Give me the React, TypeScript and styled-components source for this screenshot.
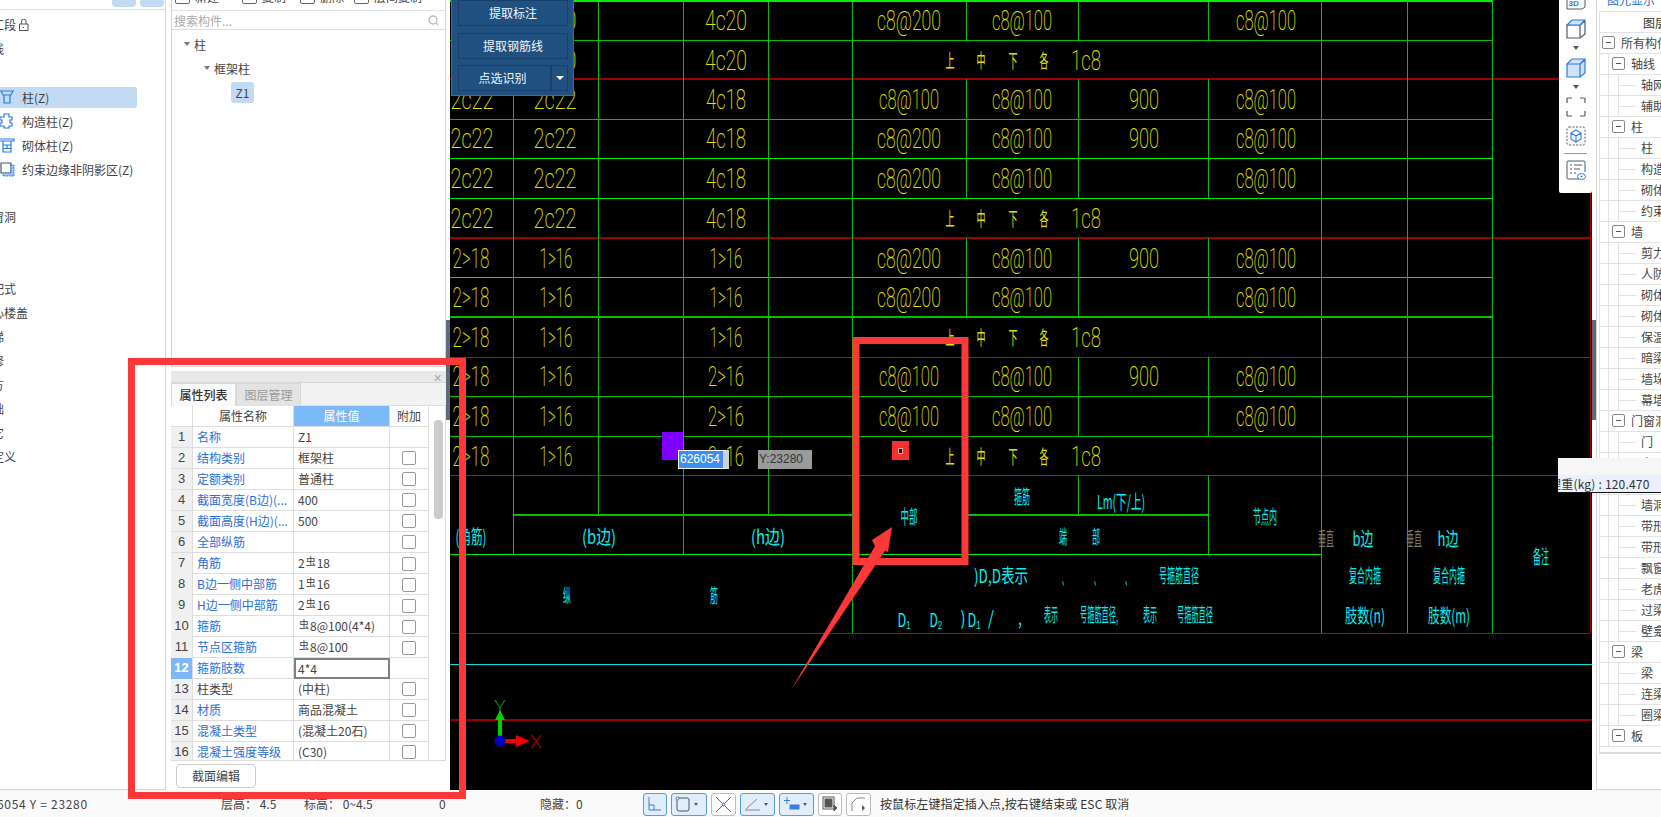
import React from "react";
import styled, { createGlobalStyle } from "styled-components";

const Global = createGlobalStyle`
  html, body { margin: 0; padding: 0; background: #fff; overflow: hidden; }
  body { font-family: "Noto Sans CJK SC", "Liberation Sans", sans-serif; font-size: 12px; color: #333; }
  * { box-sizing: border-box; }
`;

const Page = styled.div`
  position: relative;
  width: 1661px;
  height: 817px;
  overflow: hidden;
  display: flex;
  flex-direction: column;
`;
const Main = styled.div`
  position: relative;
  display: flex;
  height: 790px;
`;

/* ---------- left ---------- */
const LeftPanel = styled.aside`
  width: 166px;
  flex: none;
  border-right: 1px solid #d4d4d4;
  border-bottom: 1px solid #d4d4d4;
  overflow: hidden;
`;
const LeftHead = styled.div`
  height: 10px;
  border-bottom: 1px solid #ddd;
  display: flex;
  justify-content: flex-end;
  gap: 4px;
  padding-right: 1px;
`;
const HeadButton = styled.div`
  width: 24px;
  height: 7px;
  background: #c3daf3;
  border-radius: 0 0 4px 4px;
  display: flex;
  justify-content: center;
`;
const LeftList = styled.div`
  padding-top: 3px;
  display: flex;
  flex-direction: column;
`;
const GroupRow = styled.div`
  height: 24px;
  flex: none;
  line-height: 24px;
  margin-left: -20px;
  white-space: nowrap;
  display: flex;
  align-items: center;
  gap: 3px;
  color: #444;
`;
const ChildRow = styled.div<{ $active?: boolean }>`
  height: 21px;
  flex: none;
  margin: 1.5px 28px 1.5px 0;
  display: flex;
  align-items: center;
  gap: 7px;
  white-space: nowrap;
  border-radius: 0 3px 3px 0;
  color: #444;
  background: ${(p) => (p.$active ? "#c3daf3" : "transparent")};
`;

/* ---------- middle ---------- */
const MiddleColumn = styled.div`
  width: 275px;
  flex: none;
  margin-left: 5px;
  display: flex;
  flex-direction: column;
`;
const ComponentPanel = styled.section`
  height: 367px;
  flex: none;
  border-left: 1px solid #d4d4d4;
  border-right: 1px solid #d4d4d4;
  border-bottom: 1px solid #d4d4d4;
`;
const TopTools = styled.div`
  height: 11px;
  overflow: hidden;
  display: flex;
  border-bottom: 1px solid #e2e2e2;
  padding-left: 3px;
`;
const TopTool = styled.div<{ $w: number }>`
  width: ${(p) => p.$w}px;
  margin-top: -11px;
  height: 16px;
  line-height: 16px;
  display: flex;
  gap: 5px;
  white-space: nowrap;
  color: #444;
`;
const ToolGlyph = styled.span`
  width: 15px;
  height: 15px;
  border: 1px solid #666;
  border-radius: 2px;
`;
const SearchRow = styled.div`
  height: 19px;
  display: flex;
  align-items: center;
  justify-content: space-between;
  padding: 0 6px 0 2px;
  border-bottom: 1px solid #ddd;
  color: #aaa;
`;
const TreeBody = styled.div`
  padding-top: 2px;
`;
const TreeRow = styled.div<{ $level: number }>`
  height: 24px;
  display: flex;
  align-items: center;
  gap: 4px;
  padding-left: ${(p) => 12 + p.$level * 20}px;
  color: #444;
`;
const TreeCaret = styled.span`
  width: 0;
  height: 0;
  border-left: 3px solid transparent;
  border-right: 3px solid transparent;
  border-top: 4px solid #777;
`;
const LeafChip = styled.span`
  margin-left: 47px;
  width: 23px;
  height: 21px;
  line-height: 21px;
  text-align: center;
  background: #c3daf3;
  border-radius: 3px;
  color: #444;
`;

const PropertyPanel = styled.section`
  margin-top: 4px;
  flex: 1;
  display: flex;
  flex-direction: column;
`;
const PanelTitle = styled.div`
  height: 12px;
  flex: none;
  background: #e8e8e8;
  border-bottom: 1px solid #d8d8d8;
  display: flex;
  align-items: center;
  justify-content: flex-end;
  padding-right: 4px;
  color: #aaa;
  font-size: 11px;
`;
const TabRow = styled.div`
  height: 23px;
  flex: none;
  display: flex;
  background: #f2f2f2;
  border-bottom: 1px solid #ddd;
`;
const Tab = styled.div<{ $active?: boolean }>`
  width: 65px;
  height: 23px;
  line-height: 21px;
  text-align: center;
  font-weight: ${(p) => (p.$active ? 500 : 400)};
  color: ${(p) => (p.$active ? "#333" : "#999")};
  background: ${(p) => (p.$active ? "#fafafa" : "#e3e3e3")};
  border: 1px solid #d8d8d8;
  border-bottom: none;
`;
const TableWrap = styled.div`
  height: 355px;
  flex: none;
  display: flex;
  border-bottom: 1px solid #ddd;
  border-right: 1px solid #ddd;
  overflow: hidden;
`;
const Table = styled.div`
  width: 258px;
  flex: none;
`;
const TableRow = styled.div`
  display: grid;
  grid-template-columns: 22px 101px 96px 39px;
  height: 21px;
  line-height: 20px;
  border-bottom: 1px solid #ddd;
`;
const HeadCell = styled.div<{ $on?: boolean }>`
  text-align: center;
  border-right: 1px solid #ddd;
  color: ${(p) => (p.$on ? "#fff" : "#444")};
  background: ${(p) => (p.$on ? "#7db8f8" : "#fff")};
`;
const IndexCell = styled.div<{ $on?: boolean }>`
  text-align: center;
  border-right: 1px solid #ddd;
  background: ${(p) => (p.$on ? "#7db8f8" : "#f0f0f0")};
  color: ${(p) => (p.$on ? "#fff" : "#444")};
  font-weight: ${(p) => (p.$on ? 700 : 400)};
  font-family: "Liberation Sans", sans-serif;
  font-size: 13px;
`;
const NameCell = styled.div<{ $plain?: boolean }>`
  padding-left: 4px;
  border-right: 1px solid #ddd;
  color: ${(p) => (p.$plain ? "#444" : "#2a6fdc")};
  white-space: nowrap;
  overflow: hidden;
`;
const ValueCell = styled.div<{ $on?: boolean }>`
  padding-left: ${(p) => (p.$on ? 2 : 4)}px;
  color: #444;
  white-space: nowrap;
  line-height: ${(p) => (p.$on ? 17 : 20)}px;
  border: ${(p) => (p.$on ? "2px solid #808080" : "none")};
  border-right: ${(p) => (p.$on ? "2px solid #808080" : "1px solid #ddd")};
`;
const ExtraCell = styled.div`
  border-right: 1px solid #ddd;
  display: flex;
  align-items: center;
  justify-content: center;
`;
const Check = styled.span`
  width: 14px;
  height: 14px;
  border: 1px solid #999;
  border-radius: 2px;
  background: #fff;
`;
const Rebar = styled.span`
  font-size: 10px;
  position: relative;
  top: -3px;
  margin: 0 1px;
`;
const ScrollTrack = styled.div`
  flex: 1;
  padding: 14px 2px 0 5px;
`;
const ScrollThumb = styled.div`
  height: 99px;
  background: #ccc;
  border-radius: 4px;
`;
const PanelFoot = styled.div`
  padding: 3px 0 0 5px;
`;
const EditButton = styled.div`
  width: 80px;
  height: 24px;
  line-height: 22px;
  text-align: center;
  border: 1px solid #ccc;
  border-radius: 4px;
  color: #444;
`;

const Splitter = styled.div`
  width: 4px;
  flex: none;
  padding-top: 320px;
`;
const SplitThumb = styled.div`
  height: 100px;
  background: #5f6b77;
`;

/* ---------- canvas ---------- */
const Canvas = styled.div`
  position: relative;
  width: 1142px;
  height: 790px;
  flex: none;
  background: #000;
  overflow: hidden;
`;
const Drawing = styled.svg`
  display: block;
  width: 1142px;
  height: 790px;
`;
const CadText = styled.text<{ $cjk?: boolean; $size: number; $fill: string }>`
  font-family: ${(p) => (p.$cjk ? '"Noto Sans CJK SC", sans-serif' : 'Roboto, "Liberation Sans", sans-serif')};
  font-weight: ${(p) => (p.$cjk ? 400 : 200)};
  font-size: ${(p) => p.$size}px;
  fill: ${(p) => p.$fill};
  text-anchor: middle;
  dominant-baseline: central;
`;
const ExtractPanel = styled.div`
  position: absolute;
  left: 1px;
  top: -6px;
  width: 123px;
  height: 102px;
  background: #1f5080;
  border: 1px solid #2f70b0;
  padding: 5px 5px 0 6px;
  display: flex;
  flex-direction: column;
  gap: 7px;
`;
const ExtractButton = styled.div`
  height: 26px;
  line-height: 24px;
  text-align: center;
  color: #f2f6fa;
  background: #1f5080;
  border: 1px solid #183f68;
  display: flex;
  justify-content: center;
`;
const SplitRow = styled.div`
  display: flex;
  height: 26px;
  margin-top: -1px;
`;
const SplitMain = styled(ExtractButton)`
  flex: 1;
  padding-right: 4px;
`;
const SplitCaret = styled(ExtractButton)`
  width: 17px;
  align-items: center;
  &::after {
    content: "";
    border-left: 4px solid transparent;
    border-right: 4px solid transparent;
    border-top: 4px solid #fff;
  }
`;
const Square = styled.div`
  position: absolute;
  left: 212px;
  top: 432px;
  width: 21px;
  height: 28px;
  background: #8000ff;
`;
const XInput = styled.div`
  position: absolute;
  left: 228px;
  top: 450px;
  width: 51px;
  height: 19px;
  background: #3b8ff0;
  border: 1px solid #fff;
  border-right: 6px solid #d0d0d0;
  color: #fff;
  line-height: 17px;
  padding-left: 1px;
  font-family: "Liberation Sans", sans-serif;
`;
const YInput = styled.div`
  position: absolute;
  left: 308px;
  top: 450px;
  width: 54px;
  height: 19px;
  background: #9a9a9a;
  color: #333;
  line-height: 19px;
  padding-left: 1px;
  font-family: "Liberation Sans", sans-serif;
`;
const Marker = styled.div`
  position: absolute;
  left: 442px;
  top: 441px;
  width: 17px;
  height: 19px;
  background: #f43030;
  display: flex;
  align-items: center;
  justify-content: center;
  &::after {
    content: "";
    width: 3px;
    height: 4px;
    background: #111;
    outline: 1px solid #f0a0a0;
  }
`;
const ViewTools = styled.div`
  position: absolute;
  right: 0;
  top: 0;
  width: 33px;
  height: 193px;
  background: #fff;
  border-radius: 0 0 2px 2px;
  display: flex;
  flex-direction: column;
  align-items: center;
`;
const ViewIcon = styled.svg<{ $mt: number }>`
  display: block;
  margin-top: ${(p) => p.$mt}px;
  flex: none;
`;
const ViewCaret = styled.span`
  margin-top: 7px;
  width: 0;
  height: 0;
  flex: none;
  border-left: 3px solid transparent;
  border-right: 3px solid transparent;
  border-top: 4px solid #555;
`;
const ViewDivider = styled.span`
  margin-top: 7px;
  width: 23px;
  height: 1px;
  flex: none;
  background: #999;
`;

/* ---------- right ---------- */
const RightSplit = styled.div`
  width: 4px;
  flex: none;
  padding-top: 320px;
  background: #fff;
`;
const RightPanel = styled.aside`
  flex: 1;
  min-width: 0;
  border-left: 1px solid #d4d4d4;
  border-bottom: 1px solid #d4d4d4;
  padding-left: 2px;
  overflow: hidden;
`;
const RightTab = styled.div`
  height: 11px;
  overflow: hidden;
  padding-left: 8px;
  color: #2a6fdc;
  white-space: nowrap;
  line-height: 0;
`;
const LayerHead = styled.div`
  height: 22px;
  line-height: 21px;
  padding-left: 43px;
  border: 1px solid #e2e2e2;
  border-right: none;
  white-space: nowrap;
  overflow: hidden;
`;
const LayerRow = styled.div`
  height: 21px;
  display: flex;
  align-items: stretch;
  border-bottom: 1px solid #e2e2e2;
  border-left: 1px solid #e2e2e2;
  white-space: nowrap;
  overflow: hidden;
  color: #444;
  line-height: 20px;
`;
const Spacer = styled.span<{ $w: number }>`
  width: ${(p) => p.$w}px;
  flex: none;
`;
const Guide = styled.span<{ $w: number; $dash?: boolean; $ml?: number }>`
  width: ${(p) => p.$w}px;
  margin-left: ${(p) => p.$ml ?? 0}px;
  flex: none;
  border-left: 1px solid #e2e2e2;
  background: ${(p) => (p.$dash ? "linear-gradient(#e2e2e2,#e2e2e2) no-repeat 0 10px / 17px 1px" : "none")};
`;
const Minus = styled.span`
  width: 13px;
  height: 13px;
  margin: 3px 6px 0 0;
  flex: none;
  border: 1px solid #888;
  border-radius: 2px;
  background: #fff;
  display: flex;
  align-items: center;
  justify-content: center;
  &::after {
    content: "";
    width: 5px;
    height: 1px;
    background: #555;
  }
`;
const LayerEnd = styled.div`
  height: 7px;
  border-left: 1px solid #e2e2e2;
  border-bottom: 2px solid #ddd;
`;
const WeightTip = styled.div`
  position: absolute;
  left: 1558px;
  top: 458px;
  width: 103px;
  height: 35px;
  background: #f6f6f6;
  border-bottom: 1px solid #111;
  padding-top: 17px;
`;
const WeightValue = styled.div`
  height: 17px;
  line-height: 17px;
  text-indent: -9px;
  background: #eaf1fb;
  white-space: nowrap;
  overflow: hidden;
  letter-spacing: 0.2px;
`;

/* ---------- status ---------- */
const StatusBar = styled.footer`
  flex: 1;
  background: #fafafa;
  display: flex;
  align-items: center;
  white-space: nowrap;
  color: #444;
`;
const StatusCell = styled.span<{ $w: number; $shift?: number; $wide?: boolean }>`
  width: ${(p) => p.$w}px;
  flex: none;
  margin-left: ${(p) => p.$shift ?? 0}px;
  letter-spacing: ${(p) => (p.$wide ? "0.7px" : "0")};
`;
const StatusTools = styled.div`
  display: flex;
  gap: 4px;
  align-items: center;
  padding-top: 1px;
`;
const StatusButton = styled.div<{ $on?: boolean; $w: number }>`
  width: ${(p) => p.$w}px;
  height: 23px;
  border: 1px solid ${(p) => (p.$on ? "#5a9ae6" : "#bbb")};
  border-radius: 3px;
  background: ${(p) => (p.$on ? "#e1edfb" : "#fff")};
  display: flex;
  align-items: center;
  justify-content: flex-start;
  padding-left: 3px;
  gap: 3px;
`;
const StatusCaret = styled.span`
  width: 0;
  height: 0;
  border-left: 2.5px solid transparent;
  border-right: 2.5px solid transparent;
  border-top: 3px solid #555;
`;
const Hint = styled.span`
  margin-left: 9px;
  color: #333;
  letter-spacing: 0.12px;
`;

/* ---------- annotations ---------- */
const Overlay = styled.svg`
  position: absolute;
  left: 0;
  top: 0;
  pointer-events: none;
`;

/* ---------- data ---------- */
const GREEN = "#00ee00";
const DIM = "#00c000";
const RED = "#e00000";
const DARK = "#a00000";
const YEL = "#e2e200";
const CY = "#00f0f0";

const hLines: [number, number, number, string, number][] = [
  [450, 1492, 1, GREEN, 2],
  [450, 1492, 40, DIM, 1],
  [450, 1590, 79, DARK, 2],
  [450, 1492, 119, DIM, 1],
  [450, 1492, 158, GREEN, 1],
  [450, 1492, 198, GREEN, 1],
  [450, 1590, 238, DARK, 2],
  [450, 1492, 277, GREEN, 1],
  [450, 1492, 317, DIM, 2],
  [450, 1590, 357, RED, 1],
  [450, 1492, 396, DIM, 1],
  [450, 1492, 436, DIM, 1],
  [450, 1590, 475, RED, 1],
  [513, 852, 515, DIM, 2],
  [966, 1208, 515, DIM, 2],
  [450, 1321, 554, GREEN, 1],
  [450, 1590, 633, "#c00000", 1],
  [450, 1592, 664, "#00e0e0", 1],
  [450, 1592, 720, "#900000", 2],
];
const rowBands: [number, number][] = [[1, 40], [79, 198], [238, 317], [357, 436]];
const vLines: [number, number, number, string][] = [
  [513, 0, 554, DIM],
  [598, 0, 515, DIM],
  [683, 0, 554, DIM],
  [768, 0, 515, DIM],
  [852, 0, 633, DIM],
  [1321, 0, 633, DIM],
  [1407, 0, 633, DIM],
  [1492, 0, 633, DIM],
  [966, 475, 554, DIM],
  [1078, 475, 515, DIM],
  [1208, 475, 554, DIM],
  [1590, 79, 633, DARK],
  ...rowBands.flatMap(([a, b]) =>
    [966, 1078, 1208].map((x) => [x, a, b, DIM] as [number, number, number, string])
  ),
];
const rowY = [20, 60, 99, 138, 178, 218, 258, 297, 337, 376, 416, 456];
type T = [string, number, number, number];
const yellow: T[] = [];
const put = (s: string, x: number, w: number, rows: number[]) =>
  rows.forEach((r) => yellow.push([s, x, rowY[r - 1], w]));
put("2c20", 555, 43, [1, 2]);
put("2c22", 472, 43, [3, 4, 5, 6]);
put("2c22", 555, 43, [3, 4, 5, 6]);
put("2>18", 471, 37, [7, 8, 9, 10, 11, 12]);
put("1>16", 556, 33, [7, 8, 9, 10, 11, 12]);
put("4c20", 726, 42, [1, 2]);
put("4c18", 726, 40, [3, 4, 5, 6]);
put("1>16", 726, 33, [7, 8, 9]);
put("2>16", 726, 36, [10, 11, 12]);
put("c8@200", 909, 64, [1, 4, 5, 7, 8]);
put("c8@100", 909, 60, [3, 10, 11]);
put("c8@100", 1022, 60, [1, 3, 4, 5, 7, 8, 10, 11]);
put("900", 1144, 30, [3, 4, 7, 10]);
put("c8@100", 1266, 60, [1, 3, 4, 5, 7, 8, 10, 11]);
put("1c8", 1086, 30, [2, 6, 9, 12]);

const yellowCjk: T[] = [];
[2, 6, 9, 12].forEach((r) => {
  ["上", "中", "下", "各"].forEach((c, i) =>
    yellowCjk.push([c, [950, 981, 1013, 1044][i], rowY[r - 1] - 1, 9])
  );
});

const cyan: T[] = [
  ["中部", 909, 515, 17],
  ["(角筋)", 471, 535, 31],
  ["(b边)", 599, 535, 34],
  ["(h边)", 768, 535, 34],
  ["纵", 567, 594, 8],
  ["筋", 714, 594, 8],
  [")D,D表示", 1001, 574, 54],
  ["、", 1065, 576, 6],
  ["、", 1097, 576, 6],
  ["、", 1128, 576, 6],
  ["号箍筋直径", 1179, 574, 40],
  ["D₁", 904, 618, 13],
  ["D₂", 936, 618, 13],
  [")", 963, 616, 5],
  ["D₁", 974, 618, 13],
  ["/", 991, 616, 6],
  [",", 1020, 616, 4],
  ["表示", 1051, 613, 14],
  ["号箍筋直径,", 1099, 613, 38],
  ["表示", 1150, 613, 14],
  ["号箍筋直径", 1195, 613, 36],
  ["箍筋", 1022, 495, 16],
  ["Lm(下/上)", 1121, 500, 48],
  ["端", 1063, 535, 8],
  ["部", 1096, 535, 8],
  ["节点内", 1265, 515, 24],
  ["b边", 1363, 537, 21],
  ["h边", 1448, 537, 21],
  ["复合内箍", 1365, 574, 32],
  ["复合内箍", 1449, 574, 32],
  ["肢数(n)", 1365, 614, 40],
  ["肢数(m)", 1449, 614, 42],
  ["备注", 1541, 555, 16],
];

const groupsA = ["施工段", "轴线", "柱"];
const groupsB = ["墙", "门窗洞", "梁", "板", "装配式", "空心楼盖", "楼梯", "装修", "土方", "基础", "其它", "自定义"];

const props: [string, string, boolean, boolean][] = [
  ["名称", "Z1", false, false],
  ["结构类别", "框架柱", true, false],
  ["定额类别", "普通柱", true, false],
  ["截面宽度(B边)(...", "400", true, false],
  ["截面高度(H边)(...", "500", true, false],
  ["全部纵筋", "", true, false],
  ["角筋", "2#18", true, false],
  ["B边一侧中部筋", "1#16", true, false],
  ["H边一侧中部筋", "2#16", true, false],
  ["箍筋", "#8@100(4*4)", true, false],
  ["节点区箍筋", "#8@100", true, false],
  ["箍筋肢数", "4*4", false, false],
  ["柱类型", "(中柱)", true, true],
  ["材质", "商品混凝土", true, false],
  ["混凝土类型", "(混凝土20石)", true, false],
  ["混凝土强度等级", "(C30)", true, false],
];

const layers: [string, number][] = [
  ["所有构件", 0], ["轴线", 1], ["轴网", 2], ["辅助轴线", 2], ["柱", 1], ["柱", 2], ["构造柱", 2], ["砌体柱", 2],
  ["约束边缘", 2], ["墙", 1], ["剪力墙", 2], ["人防门框墙", 2], ["砌体墙", 2], ["砌体加筋", 2], ["保温墙", 2],
  ["暗梁", 2], ["墙垛", 2], ["幕墙", 2], ["门窗洞", 1], ["门", 2], ["窗", 2], ["门联窗", 2], ["墙洞", 2],
  ["带形窗", 2], ["带形洞", 2], ["飘窗", 2], ["老虎窗", 2], ["过梁", 2], ["壁龛", 2], ["梁", 1], ["梁", 2],
  ["连梁", 2], ["圈梁", 2], ["板", 1],
];

const renderValue = (v: string) =>
  v.split("#").map((part, i) => (
    <React.Fragment key={i}>
      {i > 0 && <Rebar>虫</Rebar>}
      {part}
    </React.Fragment>
  ));

const BLUE = "#2b7be4";
const SLATE = "#4d5b6b";

const PillarIcon = () => (
  <svg width="15" height="15" viewBox="0 0 15 15" fill="none" stroke={BLUE} strokeWidth="1.2">
    <path d="M0 1h14M1 1l2 4h8l2-4M4 5v8h6V5" />
  </svg>
);
const PuzzleIcon = () => (
  <svg width="15" height="16" viewBox="0 0 15 16" fill="none" stroke={BLUE} strokeWidth="1.2">
    <path d="M0 4h4V1h5v3h3v3h-2v3h2v3H9v2H4v-2H0v-3h2V7H0z" />
  </svg>
);
const BrickIcon = () => (
  <svg width="15" height="15" viewBox="0 0 15 15" fill="none" stroke={BLUE} strokeWidth="1.2">
    <path d="M0 1h14v2H0M3 3v11h8V3M3 7h8M3 10.500h8M7 7v3.500" />
  </svg>
);
const EdgeIcon = () => (
  <svg width="15" height="15" viewBox="0 0 15 15" fill="none">
    <path d="M1 1h10v10H1z" stroke={SLATE} strokeWidth="1.2" />
    <path d="M11 3h3v11H3v-3h8z" fill="#9cc4f2" stroke={BLUE} strokeWidth="1" strokeDasharray="1.500 1" />
  </svg>
);

export default function App() {
  return (
    <Page>
      <Global />
      <Main>
        <LeftPanel>
          <LeftHead>
            <HeadButton />
            <HeadButton />
          </LeftHead>
          <LeftList>
            {groupsA.map((g) => (
              <GroupRow key={g}>
                {g}
                {g === "施工段" && (
                  <svg width="10" height="12" viewBox="0 0 10 12" fill="none" stroke="#555">
                    <path d="M.5 5h8.500v6.500H.5zM2.500 5V2.500a2 2 0 0 1 4.500 0V5M4.500 8v1" />
                  </svg>
                )}
              </GroupRow>
            ))}
            <ChildRow $active><PillarIcon />柱(Z)</ChildRow>
            <ChildRow><PuzzleIcon />构造柱(Z)</ChildRow>
            <ChildRow><BrickIcon />砌体柱(Z)</ChildRow>
            <ChildRow><EdgeIcon />约束边缘非阴影区(Z)</ChildRow>
            {groupsB.map((g) => (
              <GroupRow key={g}>{g}</GroupRow>
            ))}
          </LeftList>
        </LeftPanel>

        <MiddleColumn>
          <ComponentPanel>
            <TopTools>
              <TopTool $w={67}><ToolGlyph />新建</TopTool>
              <TopTool $w={58}><ToolGlyph />复制</TopTool>
              <TopTool $w={54}><ToolGlyph />删除</TopTool>
              <TopTool $w={80}><ToolGlyph />层间复制</TopTool>
            </TopTools>
            <SearchRow>
              搜索构件...
              <svg width="11" height="11" viewBox="0 0 11 11" fill="none" stroke="#bbb" strokeWidth="1.300">
                <circle cx="5" cy="5" r="4" />
                <path d="M8 8l2 2" />
              </svg>
            </SearchRow>
            <TreeBody>
              <TreeRow $level={0}><TreeCaret />柱</TreeRow>
              <TreeRow $level={1}><TreeCaret />框架柱</TreeRow>
              <TreeRow $level={0}><LeafChip>Z1</LeafChip></TreeRow>
            </TreeBody>
          </ComponentPanel>

          <PropertyPanel>
            <PanelTitle>✕</PanelTitle>
            <TabRow>
              <Tab $active>属性列表</Tab>
              <Tab>图层管理</Tab>
            </TabRow>
            <TableWrap>
              <Table>
                <TableRow>
                  <HeadCell />
                  <HeadCell>属性名称</HeadCell>
                  <HeadCell $on>属性值</HeadCell>
                  <HeadCell>附加</HeadCell>
                </TableRow>
                {props.map(([name, value, check, plain], i) => (
                  <TableRow key={name}>
                    <IndexCell $on={i === 11}>{i + 1}</IndexCell>
                    <NameCell $plain={plain}>{name}</NameCell>
                    <ValueCell $on={i === 11}>{renderValue(value)}</ValueCell>
                    <ExtraCell>{check && <Check />}</ExtraCell>
                  </TableRow>
                ))}
              </Table>
              <ScrollTrack>
                <ScrollThumb />
              </ScrollTrack>
            </TableWrap>
            <PanelFoot>
              <EditButton>截面编辑</EditButton>
            </PanelFoot>
          </PropertyPanel>
        </MiddleColumn>

        <Splitter>
          <SplitThumb />
        </Splitter>

        <Canvas>
          <Drawing viewBox="450 0 1142 790">
            {hLines.map(([a, b, y, c, w], i) => (
              <line key={i} x1={a} x2={b} y1={y} y2={y} stroke={c} strokeWidth={w} shapeRendering="crispEdges" />
            ))}
            {vLines.map(([x, a, b, c], i) => (
              <line key={i} x1={x} x2={x} y1={a} y2={b} stroke={c} strokeWidth={1} shapeRendering="crispEdges" />
            ))}
            {yellow.map(([s, x, y, w], i) => (
              <CadText key={i} x={x} y={y} $size={28} $fill={YEL} textLength={w} lengthAdjust="spacingAndGlyphs">
                {s}
              </CadText>
            ))}
            {yellowCjk.map(([s, x, y, w], i) => (
              <CadText key={i} $cjk x={x} y={y} $size={19} $fill={YEL} textLength={w} lengthAdjust="spacingAndGlyphs">
                {s}
              </CadText>
            ))}
            {cyan.map(([s, x, y, w], i) => (
              <CadText key={i} $cjk x={x} y={y} $size={19} $fill={CY} textLength={w} lengthAdjust="spacingAndGlyphs">
                {s}
              </CadText>
            ))}
            <CadText $cjk x={1326} y={537} $size={19} $fill="#777" textLength={16} lengthAdjust="spacingAndGlyphs">垂直</CadText>
            <CadText $cjk x={1414} y={537} $size={19} $fill="#777" textLength={16} lengthAdjust="spacingAndGlyphs">垂直</CadText>
            {/* axes */}
            <path d="M500 740V718" stroke="#00d000" strokeWidth="4" />
            <path d="M495 720l5-10 5 10z" fill="#00d000" />
            <path d="M502 741h16" stroke="#f00000" strokeWidth="4" />
            <path d="M516 735l14 6-14 6z" fill="#f00000" />
            <ellipse cx="500" cy="741" rx="5.500" ry="5.500" fill="#0000c0" />
            <CadText x={500} y={706} $size={19} $fill="#00d000">Y</CadText>
            <CadText x={536} y={741} $size={19} $fill="#f00000">X</CadText>
          </Drawing>

          <ExtractPanel>
            <ExtractButton>提取标注</ExtractButton>
            <ExtractButton>提取钢筋线</ExtractButton>
            <SplitRow>
              <SplitMain>点选识别</SplitMain>
              <SplitCaret />
            </SplitRow>
          </ExtractPanel>

          <Square />
          <XInput>626054</XInput>
          <YInput>Y:23280</YInput>
          <Marker />

          <ViewTools>
            <ViewIcon $mt={-10} width="20" height="20" viewBox="0 0 20 20" fill="none" stroke={SLATE}>
              <path d="M1 19V3h15l3-2v16l-3 2z" />
              <text x="2.500" y="16" fontSize="8" fontWeight="700" fill={BLUE} stroke="none" fontFamily="Liberation Sans">3D</text>
            </ViewIcon>
            <ViewIcon $mt={9} width="20" height="20" viewBox="0 0 20 20" fill="none" stroke={SLATE} strokeWidth="1.200">
              <path d="M1 6h13v13H1zM14 19l5-4V2M14 6l5-4" />
              <path d="M1 6l5-5h13l-5 5z" stroke={BLUE} fill="#cfe2f8" />
            </ViewIcon>
            <ViewCaret />
            <ViewIcon $mt={8} width="20" height="20" viewBox="0 0 20 20" fill="#cfe2f8" stroke={BLUE} strokeWidth="1.200">
              <path d="M1 6h13v13H1zM14 19l5-4V2l-5 4M1 6l5-5h13l-5 5z" />
            </ViewIcon>
            <ViewCaret />
            <ViewIcon $mt={8} width="20" height="20" viewBox="0 0 20 20" fill="none" stroke={SLATE} strokeWidth="1.200">
              <path d="M1 6V2a1 1 0 0 1 1-1h4M14 1h4a1 1 0 0 1 1 1v4M19 14v4a1 1 0 0 1-1 1h-4M6 19H2a1 1 0 0 1-1-1v-4" />
            </ViewIcon>
            <ViewIcon $mt={9} width="20" height="20" viewBox="0 0 20 20" fill="none">
              <rect x="1" y="1" width="18" height="18" rx="2" stroke={SLATE} strokeDasharray="2 1.500" />
              <path d="M10 4l5 3v6l-5 3-5-3V7zM5 7l5 3 5-3M10 10v6" stroke={BLUE} strokeWidth="1.100" />
            </ViewIcon>
            <ViewDivider />
            <ViewIcon $mt={6} width="20" height="20" viewBox="0 0 20 20" fill="none" stroke={SLATE}>
              <path d="M13 19H2a1 1 0 0 1-1-1V2a1 1 0 0 1 1-1h16a1 1 0 0 1 1 1v10" />
              <path d="M4 5h2M8 5h8M4 9h2M8 9h6M4 13h2M8 13h2" />
              <ellipse cx="15.500" cy="16.500" rx="4" ry="3" stroke={BLUE} fill="#fff" />
              <circle cx="15.500" cy="16.500" r="1" fill={BLUE} stroke="none" />
            </ViewIcon>
          </ViewTools>
        </Canvas>

        <RightSplit>
          <SplitThumb />
        </RightSplit>

        <RightPanel>
          <RightTab>图元显示</RightTab>
          <LayerHead>图层</LayerHead>
          {layers.map(([name, level], i) => (
            <LayerRow key={i}>
              {level === 0 && <Spacer $w={2} />}
              {level === 1 && <Guide $w={4} $ml={8} />}
              {level === 2 && (
                <>
                  <Guide $w={10} $ml={8} />
                  <Guide $w={23} $dash />
                </>
              )}
              {level < 2 && <Minus />}
              {name}
            </LayerRow>
          ))}
          <LayerEnd />
        </RightPanel>

        <WeightTip>
          <WeightValue>理重(kg) : 120.470</WeightValue>
        </WeightTip>
      </Main>

      <StatusBar>
        <StatusCell $w={224} $shift={-3} $wide>6054 Y = 23280</StatusCell>
        <StatusCell $w={83}>层高：&nbsp;4.5</StatusCell>
        <StatusCell $w={135}>标高：&nbsp;0~4.5</StatusCell>
        <StatusCell $w={101}>0</StatusCell>
        <StatusCell $w={103}>隐藏：0</StatusCell>
        <StatusTools>
          <StatusButton $on $w={24}>
            <svg width="16" height="16" viewBox="0 0 16 16" fill="none" stroke="#3a7fd8">
              <path d="M2 1v13h12M2 9h5v5" />
            </svg>
          </StatusButton>
          <StatusButton $on $w={36}>
            <svg width="16" height="17" viewBox="0 0 16 17" fill="none" stroke="#555">
              <rect x="2" y="2" width="12" height="13" rx="2" />
              <circle cx="2.500" cy="2.500" r="1.500" stroke="#3a7fd8" fill="#fff" />
            </svg>
            <StatusCaret />
          </StatusButton>
          <StatusButton $w={25}>
            <svg width="17" height="17" viewBox="0 0 17 17" fill="none" stroke="#666">
              <path d="M1 1l15 15M16 1L1 16" />
              <circle cx="8.500" cy="8.500" r="1.300" stroke="#3a7fd8" fill="#fff" />
            </svg>
          </StatusButton>
          <StatusButton $on $w={35}>
            <svg width="17" height="16" viewBox="0 0 17 16" fill="none" stroke="#888">
              <path d="M2 13L13 3M1 14h15" />
            </svg>
            <StatusCaret />
          </StatusButton>
          <StatusButton $on $w={35}>
            <svg width="17" height="16" viewBox="0 0 17 16" fill="none" stroke="#3a7fd8">
              <path d="M4 1v7M1 4.500h6" />
              <rect x="7" y="9" width="9" height="4" fill="#3a7fd8" />
            </svg>
            <StatusCaret />
          </StatusButton>
          <StatusButton $w={24}>
            <svg width="16" height="16" viewBox="0 0 16 16" fill="none" stroke="#555">
              <rect x="1" y="1" width="11" height="12" />
              <rect x="3" y="3" width="7" height="8" fill="#555" />
              <path d="M12 9l3 3-3 3z" fill="#555" />
            </svg>
          </StatusButton>
          <StatusButton $w={25}>
            <svg width="17" height="16" viewBox="0 0 17 16" fill="none" stroke="#888">
              <path d="M2 15V7l5-5h8" />
              <path d="M12 9l3 3-3 3z" fill="#555" stroke="none" />
            </svg>
          </StatusButton>
        </StatusTools>
        <Hint>按鼠标左键指定插入点,按右键结束或 ESC 取消</Hint>
      </StatusBar>

      <Overlay width="1661" height="817" viewBox="0 0 1661 817">
        <rect x="131.500" y="361.500" width="331" height="434" fill="none" stroke="#fd3838" strokeWidth="7" />
        <rect x="856" y="340.500" width="109" height="221" fill="none" stroke="#fd3838" strokeWidth="7" />
        <polygon points="791,690 875,546 872,540 892,527 888,552 885,551" fill="#fd3838" />
      </Overlay>
    </Page>
  );
}
